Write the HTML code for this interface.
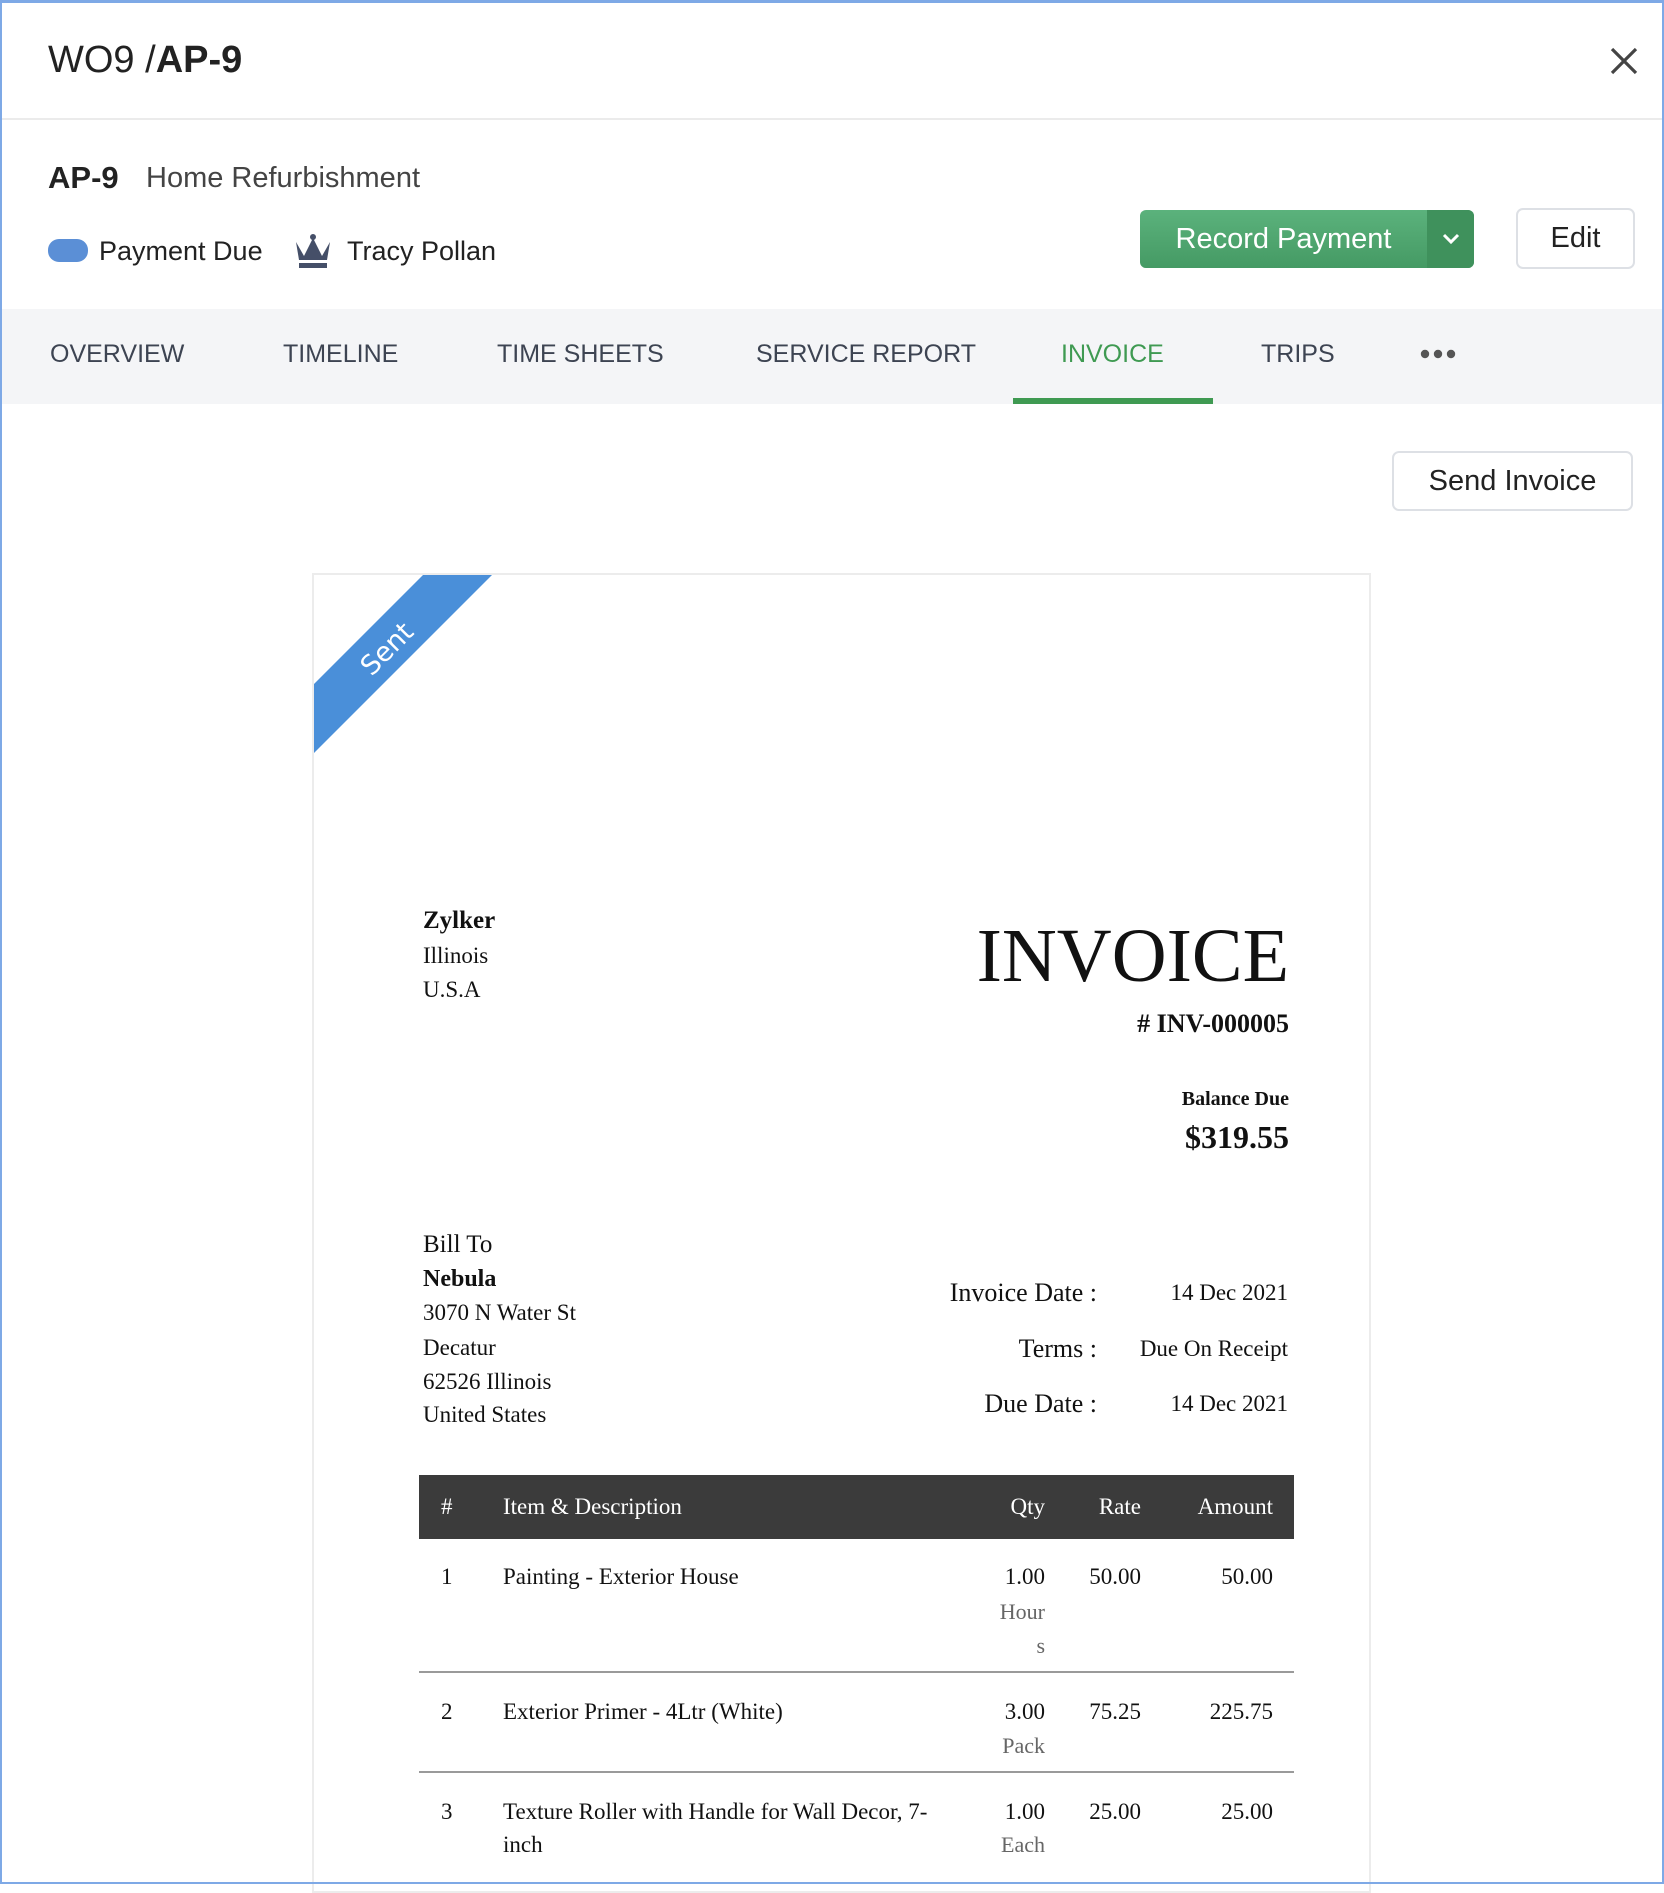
<!DOCTYPE html>
<html><head><meta charset="utf-8"><style>
*{margin:0;padding:0;box-sizing:border-box}
body{width:1664px;height:1884px;overflow:hidden;background:#fff;font-family:"Liberation Sans",sans-serif;color:#222;position:relative}
.frame{position:absolute;left:0;top:0;width:1664px;height:1884px;border:2px solid #7ea9e6;border-top-width:3px;z-index:10;pointer-events:none}
.a{position:absolute;white-space:nowrap}
.s{font-family:"Liberation Serif",serif;color:#111}
.tab{position:absolute;top:338px;line-height:32px;font-size:25px;color:#3d4452}
.r{text-align:right}
</style></head><body>
<div class="frame"></div>
<div class="a" style="left:48px;top:38px;font-size:38px;line-height:44px;color:#222">WO9 /<b>AP-9</b></div>
<svg class="a" style="left:1610px;top:47px" width="28" height="28" viewBox="0 0 28 28"><path d="M2 2L26 26M26 2L2 26" stroke="#444" stroke-width="3.2"/></svg>
<div class="a" style="left:0;top:118px;width:1664px;height:2px;background:#ebebeb"></div>
<div class="a" style="left:48px;top:160px;font-size:31px;line-height:36px"><b>AP-9</b></div>
<div class="a" style="left:146px;top:160px;font-size:29px;line-height:36px;color:#444">Home Refurbishment</div>
<div class="a" style="left:48px;top:239px;width:40px;height:23px;border-radius:11px;background:#5b8fd6"></div>
<div class="a" style="left:99px;top:235px;font-size:27px;line-height:32px">Payment Due</div>
<svg class="a" style="left:293px;top:232px" width="40" height="38" viewBox="0 0 40 38"><path d="M3 10L11 24L20 6L29 24L37 10L34 28H6Z" fill="#454f68"/><circle cx="20" cy="5" r="3" fill="#454f68"/><rect x="6" y="31" width="28" height="5" fill="#454f68"/></svg>
<div class="a" style="left:347px;top:235px;font-size:27px;line-height:32px">Tracy Pollan</div>
<div class="a" style="left:1140px;top:210px;width:334px;height:58px;border-radius:6px;background:linear-gradient(#5bb27c,#459a64)"></div>
<div class="a" style="left:1427px;top:210px;width:47px;height:58px;border-radius:0 6px 6px 0;background:#3f915c"></div>
<div class="a" style="left:1140px;top:222px;width:287px;text-align:center;font-size:29px;line-height:34px;color:#fff">Record Payment</div>
<svg class="a" style="left:1441px;top:231px" width="20" height="16" viewBox="0 0 20 16"><path d="M3 4L10 11L17 4" stroke="#fff" stroke-width="3" fill="none"/></svg>
<div class="a" style="left:1516px;top:208px;width:119px;height:61px;border:2px solid #dde0e5;border-radius:7px;background:#fff;text-align:center;line-height:57px;font-size:29px;color:#222">Edit</div>
<div class="a" style="left:2px;top:309px;width:1660px;height:95px;background:#f4f5f7"></div>
<div class="tab" style="left:50px">OVERVIEW</div>
<div class="tab" style="left:283px">TIMELINE</div>
<div class="tab" style="left:497px">TIME SHEETS</div>
<div class="tab" style="left:756px">SERVICE REPORT</div>
<div class="tab" style="left:1061px;color:#3f9a52">INVOICE</div>
<div class="tab" style="left:1261px">TRIPS</div>
<svg class="a" style="left:1420px;top:348px" width="36" height="12" viewBox="0 0 36 12"><circle cx="5" cy="6" r="4.2" fill="#555"/><circle cx="18" cy="6" r="4.2" fill="#555"/><circle cx="31" cy="6" r="4.2" fill="#555"/></svg>
<div class="a" style="left:1013px;top:398px;width:200px;height:6px;background:#3f9a52"></div>
<div class="a" style="left:1392px;top:451px;width:241px;height:60px;border:2px solid #dde0e5;border-radius:7px;text-align:center;line-height:56px;font-size:29px">Send Invoice</div>
<div class="a" style="left:312px;top:573px;width:1059px;height:1320px;border:2px solid #ececec;overflow:hidden">
 <svg style="position:absolute;left:-2px;top:-2px" width="200" height="200" viewBox="312 573 200 200"><polygon points="425,573 494,573 312,755 312,686" fill="#4a8fd9"/><text x="0" y="0" transform="translate(388,650) rotate(-45)" text-anchor="middle" dominant-baseline="middle" font-family="DejaVu Sans, sans-serif" font-size="27" fill="#fff">Sent</text></svg>
</div>
<div class="a s" style="left:423px;top:906px;font-size:25px;line-height:30px"><b>Zylker</b></div>
<div class="a s" style="left:423px;top:941px;font-size:23px;line-height:30px">Illinois</div>
<div class="a s" style="left:423px;top:975px;font-size:23px;line-height:30px">U.S.A</div>
<div class="a s r" style="right:375px;top:916px;font-size:76px;line-height:80px">INVOICE</div>
<div class="a s r" style="right:375px;top:1008px;font-size:26px;line-height:32px"><b># INV-000005</b></div>
<div class="a s r" style="right:375px;top:1087px;font-size:20px;line-height:24px"><b>Balance Due</b></div>
<div class="a s r" style="right:375px;top:1117px;font-size:32px;line-height:40px"><b>$319.55</b></div>
<div class="a s" style="left:423px;top:1230px;font-size:25px;line-height:30px">Bill To</div>
<div class="a s" style="left:423px;top:1264px;font-size:24px;line-height:30px"><b>Nebula</b></div>
<div class="a s" style="left:423px;top:1298px;font-size:23px;line-height:30px">3070 N Water St</div>
<div class="a s" style="left:423px;top:1333px;font-size:23px;line-height:30px">Decatur</div>
<div class="a s" style="left:423px;top:1367px;font-size:23px;line-height:30px">62526 Illinois</div>
<div class="a s" style="left:423px;top:1400px;font-size:23px;line-height:30px">United States</div>
<div class="a s r" style="right:567px;top:1277px;font-size:26px;line-height:32px">Invoice Date :</div>
<div class="a s r" style="right:376px;top:1278px;font-size:23px;line-height:30px">14 Dec 2021</div>
<div class="a s r" style="right:567px;top:1333px;font-size:26px;line-height:32px">Terms :</div>
<div class="a s r" style="right:376px;top:1334px;font-size:23px;line-height:30px">Due On Receipt</div>
<div class="a s r" style="right:567px;top:1388px;font-size:26px;line-height:32px">Due Date :</div>
<div class="a s r" style="right:376px;top:1389px;font-size:23px;line-height:30px">14 Dec 2021</div>
<div class="a" style="left:419px;top:1475px;width:875px;height:64px;background:#3b3b3b"></div>
<div class="a s" style="left:441px;top:1492px;font-size:23px;line-height:30px;color:#fff">#</div>
<div class="a s" style="left:503px;top:1492px;font-size:23px;line-height:30px;color:#fff">Item &amp; Description</div>
<div class="a s r" style="right:619px;top:1492px;font-size:23px;line-height:30px;color:#fff">Qty</div>
<div class="a s r" style="right:523px;top:1492px;font-size:23px;line-height:30px;color:#fff">Rate</div>
<div class="a s r" style="right:391px;top:1492px;font-size:23px;line-height:30px;color:#fff">Amount</div>
<div class="a s" style="left:441px;top:1562px;font-size:23px;line-height:30px">1</div>
<div class="a s" style="left:503px;top:1562px;font-size:23px;line-height:30px">Painting - Exterior House</div>
<div class="a s r" style="right:619px;top:1562px;font-size:23px;line-height:30px">1.00</div>
<div class="a s r" style="right:619px;top:1597px;font-size:22px;line-height:30px;color:#666">Hour</div>
<div class="a s r" style="right:619px;top:1631px;font-size:22px;line-height:30px;color:#666">s</div>
<div class="a s r" style="right:523px;top:1562px;font-size:23px;line-height:30px">50.00</div>
<div class="a s r" style="right:391px;top:1562px;font-size:23px;line-height:30px">50.00</div>
<div class="a" style="left:419px;top:1671px;width:875px;height:2px;background:#9a9a9a"></div>
<div class="a s" style="left:441px;top:1697px;font-size:23px;line-height:30px">2</div>
<div class="a s" style="left:503px;top:1697px;font-size:23px;line-height:30px">Exterior Primer - 4Ltr (White)</div>
<div class="a s r" style="right:619px;top:1697px;font-size:23px;line-height:30px">3.00</div>
<div class="a s r" style="right:619px;top:1731px;font-size:22px;line-height:30px;color:#666">Pack</div>
<div class="a s r" style="right:523px;top:1697px;font-size:23px;line-height:30px">75.25</div>
<div class="a s r" style="right:391px;top:1697px;font-size:23px;line-height:30px">225.75</div>
<div class="a" style="left:419px;top:1771px;width:875px;height:2px;background:#9a9a9a"></div>
<div class="a s" style="left:441px;top:1797px;font-size:23px;line-height:30px">3</div>
<div class="a s" style="left:503px;top:1797px;font-size:23px;line-height:30px">Texture Roller with Handle for Wall Decor, 7-</div>
<div class="a s" style="left:503px;top:1830px;font-size:23px;line-height:30px">inch</div>
<div class="a s r" style="right:619px;top:1797px;font-size:23px;line-height:30px">1.00</div>
<div class="a s r" style="right:619px;top:1830px;font-size:22px;line-height:30px;color:#666">Each</div>
<div class="a s r" style="right:523px;top:1797px;font-size:23px;line-height:30px">25.00</div>
<div class="a s r" style="right:391px;top:1797px;font-size:23px;line-height:30px">25.00</div>
</body></html>
